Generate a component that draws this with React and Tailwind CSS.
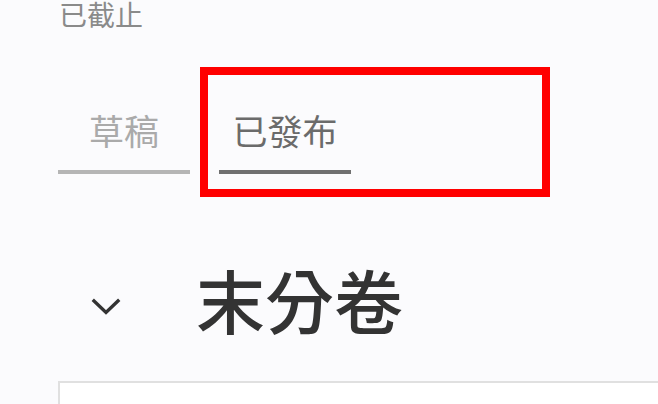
const cjk = { fontFamily: '"Noto Sans CJK TC", "Noto Sans", sans-serif' };

function Chevron() {
  return (
    <svg width="30" height="18" viewBox="0 0 30 18" fill="none" className="mt-[16px] shrink-0">
      <path d="M3 3 L15 14.5 L27 3" stroke="#333333" strokeWidth="3.4" strokeLinecap="square" strokeLinejoin="miter" />
    </svg>
  );
}

function Tab({ label, active }) {
  return (
    <button
      className={
        "w-[132px] pb-[17px] text-center text-[35px] leading-[46px] border-b-4 " +
        (active ? "border-[#707070] text-[#6b6b6b]" : "border-[#b5b5b5] text-[#aaaaaa]")
      }
    >
      {label}
    </button>
  );
}

export default function App() {
  return (
    <div className="relative h-[404px] w-full overflow-hidden bg-[#fbfbfd]" style={cjk}>
      <div className="h-[32px] pl-[59px] text-[28px] leading-[28px] text-[#8a8a8a]">已截止</div>

      <div className="mt-[75px] flex gap-[29px] pl-[58px]">
        <Tab label="草稿" />
        <Tab label="已發布" active />
      </div>

      <div className="mt-[80px] flex items-center pl-[91px]">
        <Chevron />
        <h2 className="ml-[75px] text-[69px] font-medium leading-[90px] text-[#333333]">末分卷</h2>
      </div>

      <div className="-mr-4 ml-[58px] mt-[37px] h-[80px] border-2 border-[#e0e0e0] bg-white" />

      {/* highlight around the active tab */}
      <div className="pointer-events-none absolute left-[200px] top-[67px] h-[130px] w-[350px] border-8 border-[#ff0000]" />
    </div>
  );
}
